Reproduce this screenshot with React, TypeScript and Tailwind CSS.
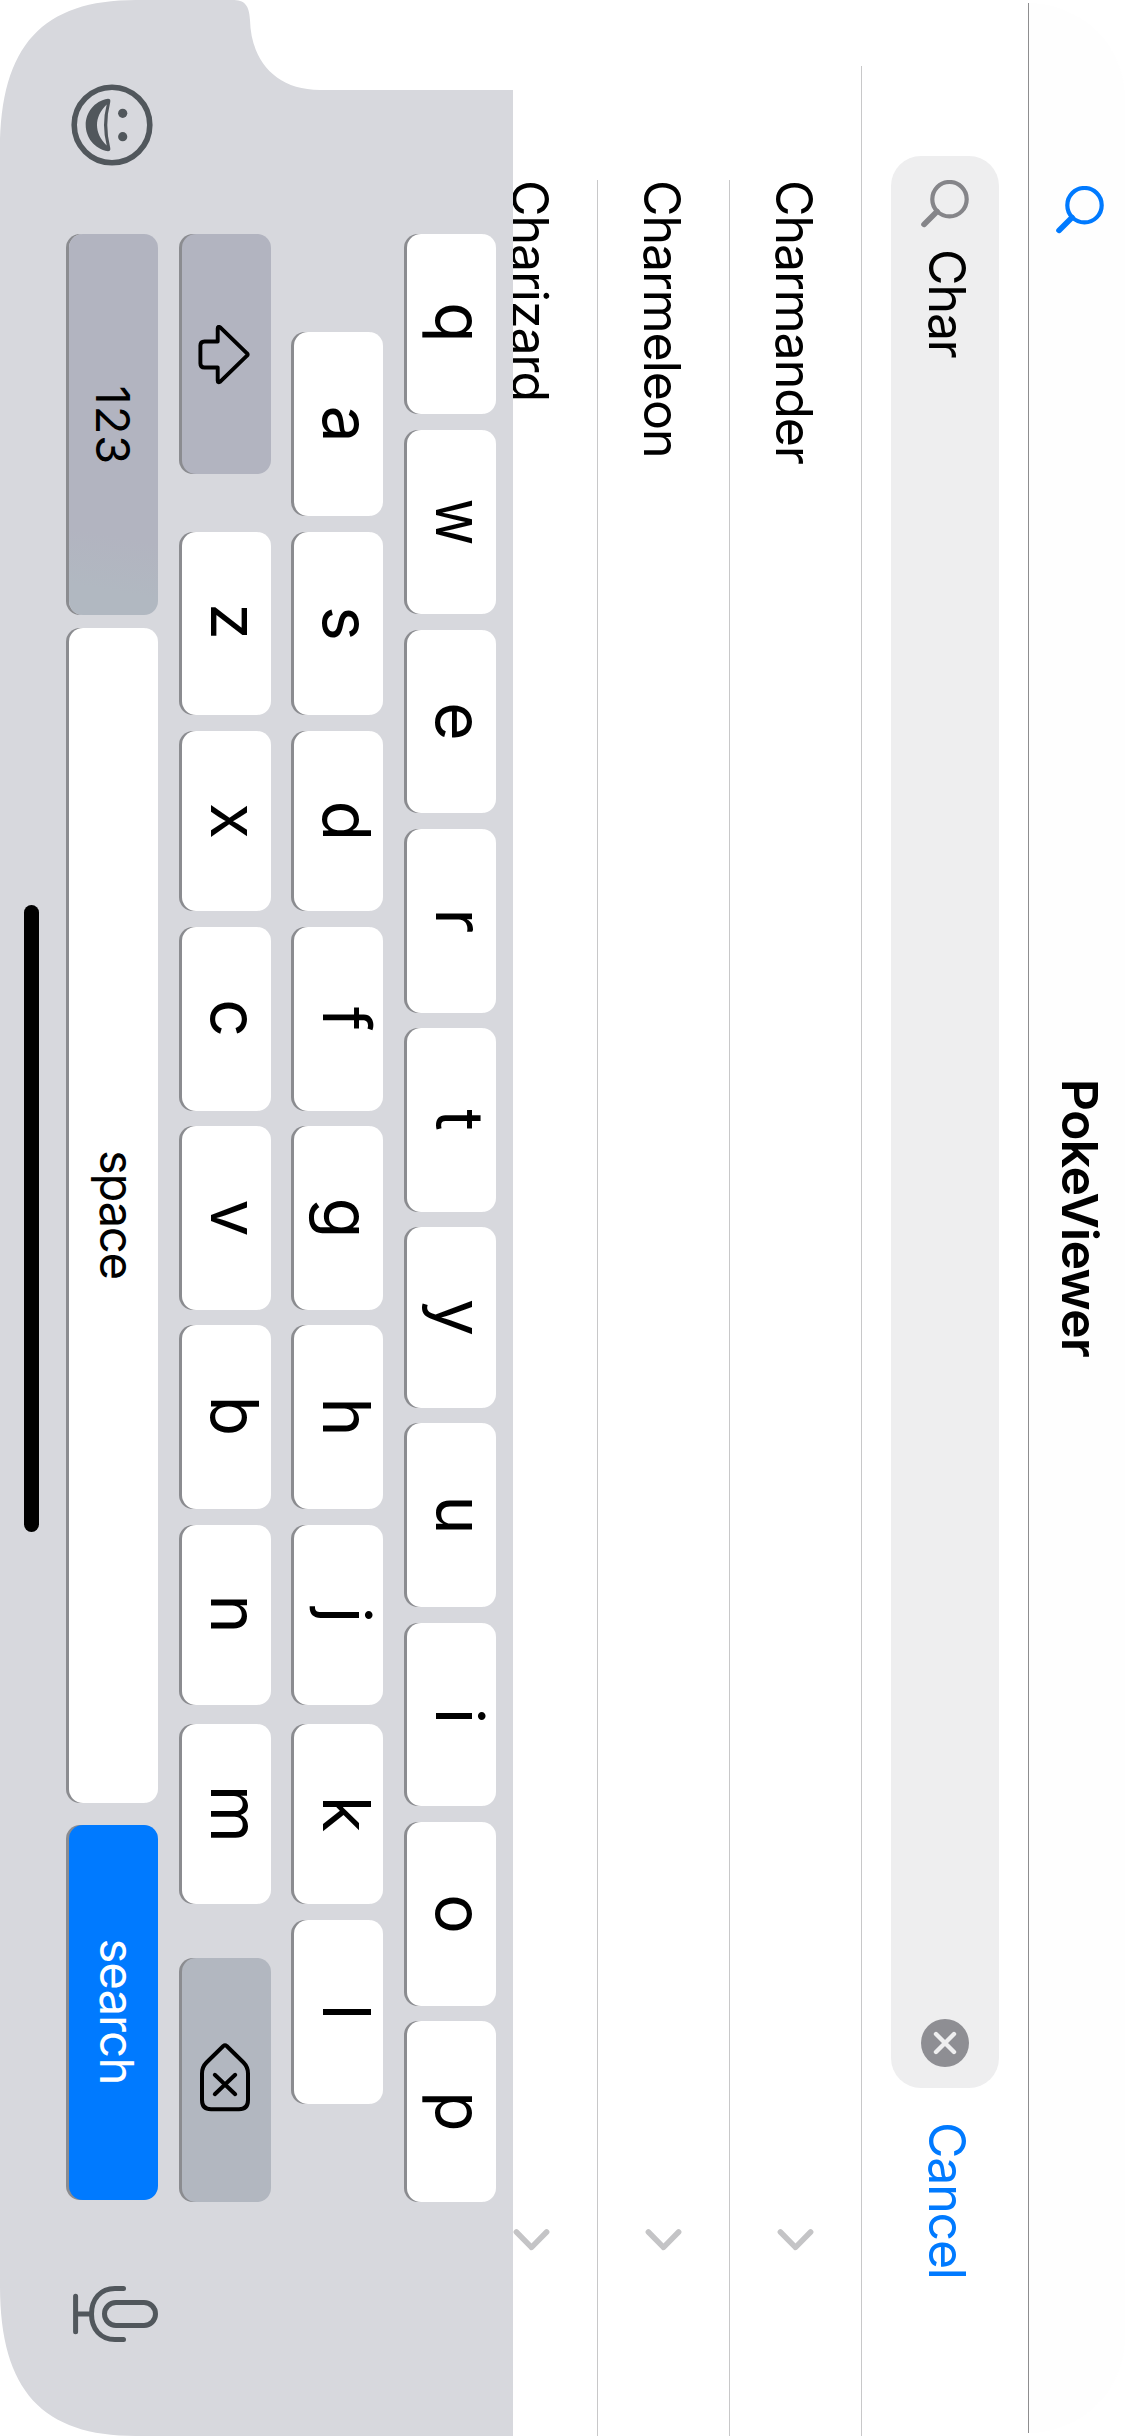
import type { ReactNode } from "react";

type KeyDef = { k: string; cls: string; text?: string };

const row1: KeyDef[] = [
  { k: "q", cls: "w-[180px] pr-[3px]" },
  { k: "w", cls: "ml-[16px] w-[184px]", text: "scale-x-[0.87]" },
  { k: "e", cls: "ml-[16px] w-[183px]" },
  { k: "r", cls: "ml-[16px] w-[184px]" },
  { k: "t", cls: "ml-[15px] w-[184px]" },
  { k: "y", cls: "ml-[15px] w-[181px]" },
  { k: "u", cls: "ml-[15px] w-[184px]" },
  { k: "i", cls: "ml-[16px] w-[183px] pl-[3px]" },
  { k: "o", cls: "ml-[16px] w-[184px]" },
  { k: "p", cls: "ml-[15px] w-[181px]" },
];

const row2: KeyDef[] = [
  { k: "a", cls: "w-[184px]" },
  { k: "s", cls: "ml-[16px] w-[183px]" },
  { k: "d", cls: "ml-[16px] w-[180px]" },
  { k: "f", cls: "ml-[16px] w-[184px]" },
  { k: "g", cls: "ml-[15px] w-[184px]" },
  { k: "h", cls: "ml-[15px] w-[184px]" },
  { k: "j", cls: "ml-[16px] w-[180px]" },
  { k: "k", cls: "ml-[19px] w-[180px]" },
  { k: "l", cls: "ml-[16px] w-[184px]" },
];

const row3: KeyDef[] = [
  { k: "z", cls: "ml-[58px] w-[183px] pr-[4px]" },
  { k: "x", cls: "ml-[16px] w-[180px]" },
  { k: "c", cls: "ml-[16px] w-[184px] pr-[2px]" },
  { k: "v", cls: "ml-[15px] w-[184px]" },
  { k: "b", cls: "ml-[15px] w-[184px] pr-[2px]" },
  { k: "n", cls: "ml-[16px] w-[180px] pr-[2px]" },
  { k: "m", cls: "ml-[19px] w-[180px]" },
];

function Key({ className, children }: { className: string; children: ReactNode }) {
  return (
    <div
      className={`flex h-[89px] shrink-0 items-center justify-center rounded-[14px] shadow-[0_3px_0_#8b8c90] ${className}`}
    >
      {children}
    </div>
  );
}

function LetterKey({ def }: { def: KeyDef }) {
  return (
    <Key className={`bg-white pb-[18px] ${def.cls}`}>
      <span className={`block text-[66px] leading-none font-[390] ${def.text ?? ""}`}>{def.k}</span>
    </Key>
  );
}

function SearchIcon({ className }: { className: string }) {
  return (
    <svg className={`h-[48px] w-[48px] shrink-0 ${className}`} viewBox="0 0 48 48" fill="none" stroke="currentColor">
      <circle cx="19.2" cy="19.5" r="17.2" strokeWidth="4.2" />
      <path d="M31.5 32 44.4 45" strokeWidth="5.6" strokeLinecap="round" />
    </svg>
  );
}

function ClearIcon() {
  return (
    <svg className="h-[48px] w-[48px] shrink-0" viewBox="0 0 48 48">
      <circle cx="24" cy="24" r="24" fill="#8e8e93" />
      <path d="M15 15 33 33M33 15 15 33" stroke="#eeeeef" strokeWidth="4.4" strokeLinecap="round" />
    </svg>
  );
}

function Chevron() {
  return (
    <svg className="h-[37px] w-[22px] shrink-0" viewBox="0 0 22 37" fill="none">
      <path d="M3 3.4 18.4 18.5 3 33.6" stroke="#c4c4c6" strokeWidth="5.6" strokeLinecap="round" strokeLinejoin="round" />
    </svg>
  );
}

function ShiftIcon() {
  return (
    <svg className="h-[52px] w-[60px]" viewBox="0 0 60 52" fill="none">
      <path
        d="M28.3 3 Q29.5 1.6 30.7 3 L56.8 30 Q58 32.3 55.5 32.3 H42.5 V45.5 Q42.5 49.6 38.4 49.6 H20.6 Q16.5 49.6 16.5 45.5 V32.3 H3.5 Q1 32.3 2.2 30 Z"
        stroke="#000"
        strokeWidth="3.9"
        strokeLinejoin="round"
      />
    </svg>
  );
}

function DeleteIcon() {
  return (
    <svg className="h-[50px] w-[69px]" viewBox="0 0 69 50" fill="none" stroke="#000" strokeWidth="4">
      <path d="M3 23.3 19.5 6.5Q24 2 30.5 2H57Q66.3 2 66.3 11V39Q66.3 48 57 48H30.5Q24 48 19.5 43.5L3 26.7Q1.6 25 3 23.3Z" />
      <path d="M31.8 14.8 51.2 35.2M51.2 14.8 31.8 35.2" strokeLinecap="round" />
    </svg>
  );
}

function EmojiIcon() {
  return (
    <svg className="h-[82px] w-[82px] shrink-0" viewBox="-41 -41 82 82" fill="#51575c">
      <circle r="37.8" fill="none" stroke="#51575c" strokeWidth="5.6" />
      <circle cx="-11.7" cy="-10.7" r="4.6" />
      <circle cx="11.7" cy="-10.7" r="4.6" />
      <path
        fillRule="evenodd"
        d="M-26.2 4Q-26.2 1-22.8 1.8Q0 7.6 22.8 1.8Q26.2 1 26.2 4C24 18 12 26.3 0 26.3S-24 18-26.2 4ZM-20.5 5.3Q0 10.7 20.5 5.3C14 12 7 15 0 15S-14 12-20.5 5.3Z"
      />
    </svg>
  );
}

function MicIcon() {
  return (
    <svg
      className="h-[85px] w-[56px] shrink-0"
      viewBox="0 0 56 85"
      fill="none"
      stroke="#51575c"
      strokeWidth="5"
      strokeLinecap="round"
    >
      <rect x="16.5" y="2.5" width="23" height="51" rx="11.5" />
      <path d="M2.5 34.5V43C2.5 57.5 13 66.5 28 66.5S53.5 57.5 53.5 43V34.5" />
      <path d="M28 66.5V82M10.2 82.4H45.8" />
    </svg>
  );
}

function ListRow({ name }: { name: string }) {
  return (
    <div className="ml-[180px] flex h-[132px] shrink-0 items-center justify-between border-b border-[#c8c8c9] pr-[185px]">
      <span className="pt-[2px] text-[50px] leading-none tracking-[-1px]">{name}</span>
      <Chevron />
    </div>
  );
}

export default function App() {
  return (
    <div className="h-[2436px] w-[1125px] overflow-hidden bg-white">
      {/* landscape phone screen, turned a quarter clockwise */}
      <div className="flex h-[1125px] w-[2436px] origin-top-left translate-x-[1125px] rotate-90 flex-col bg-white font-['Inter',sans-serif] text-black">
        <header className="mx-[3px] grid h-[97px] shrink-0 grid-cols-[1fr_auto_1fr] items-center rounded-t-[110px] bg-[#fefefe]">
          <SearchIcon className="mb-[8px] ml-[183px] text-[#007aff]" />
          <h1 className="pb-[8px] text-[50px] leading-none font-semibold tracking-[-0.7px]">PokeViewer</h1>
        </header>
        <div className="mx-[3px] -mt-px h-px shrink-0 bg-[#8e8e90]" />

        <div className="flex h-[166px] shrink-0 items-center bg-white pl-[156px]">
          <div className="flex h-[108px] w-[1932px] items-center rounded-[30px] bg-[#eeeeef] pr-[21px] pl-[24px]">
            <SearchIcon className="text-[#858589]" />
            <span className="ml-[21px] flex-1 pb-[4px] text-[50px] leading-none tracking-[-1.1px]">Char</span>
            <ClearIcon />
          </div>
          <span className="ml-[34px] pb-[4px] text-[50px] leading-none tracking-[-1.2px] text-[#007aff]">Cancel</span>
        </div>
        <div className="ml-[66px] h-px shrink-0 bg-[#c8c8c9]" />

        <main className="flex h-[348px] shrink-0 flex-col">
          <ListRow name="Charmander" />
          <ListRow name="Charmeleon" />
          <ListRow name="Charizard" />
        </main>

        <section className="relative flex h-[513px] shrink-0 flex-col bg-[#d7d8dd] pt-[17px] [clip-path:path('M90_0V193C90_238_60_262_20_263C5_264_0_268_0_281V377C0_470_45_513_150_513H2286C2391_513_2436_470_2436_377V0Z')]">
          <div className="flex pl-[234px]">
            {row1.map((d) => (
              <LetterKey key={d.k} def={d} />
            ))}
          </div>
          <div className="mt-[24px] flex pl-[332px]">
            {row2.map((d) => (
              <LetterKey key={d.k} def={d} />
            ))}
          </div>
          <div className="mt-[23px] flex pl-[234px]">
            <Key className="w-[240px] bg-[#b2b4c0] pt-[4px] pl-[2px]">
              <ShiftIcon />
            </Key>
            {row3.map((d) => (
              <LetterKey key={d.k} def={d} />
            ))}
            <Key className="ml-[54px] w-[244px] bg-[#b2b7c0] pt-[2px] pr-[6px]">
              <DeleteIcon />
            </Key>
          </div>
          <div className="mt-[24px] flex items-center">
            <div className="mt-[2px] ml-[84px]">
              <EmojiIcon />
            </div>
            <Key className="ml-[68px] w-[381px] bg-[linear-gradient(100deg,#b2b4c0_78%,#b1b8c1_92%)] pb-[1px] pl-[2px]">
              <span className="text-[47px] leading-none tracking-[1px]">123</span>
            </Key>
            <Key className="ml-[13px] w-[1175px] bg-white pr-[2px] pb-[9px]">
              <span className="text-[47px] leading-none tracking-[-1.1px]">space</span>
            </Key>
            <Key className="ml-[22px] w-[375px] bg-[#007aff] pr-[2px] pb-[9px] text-white shadow-[0_3px_0_#6d6f72]">
              <span className="text-[47px] leading-none tracking-[-0.8px]">search</span>
            </Key>
            <div className="mb-[4px] ml-[86px]">
              <MicIcon />
            </div>
          </div>
          <div className="mt-[30px] ml-[905px] h-[15px] w-[627px] rounded-full bg-black" />
        </section>
      </div>
    </div>
  );
}
